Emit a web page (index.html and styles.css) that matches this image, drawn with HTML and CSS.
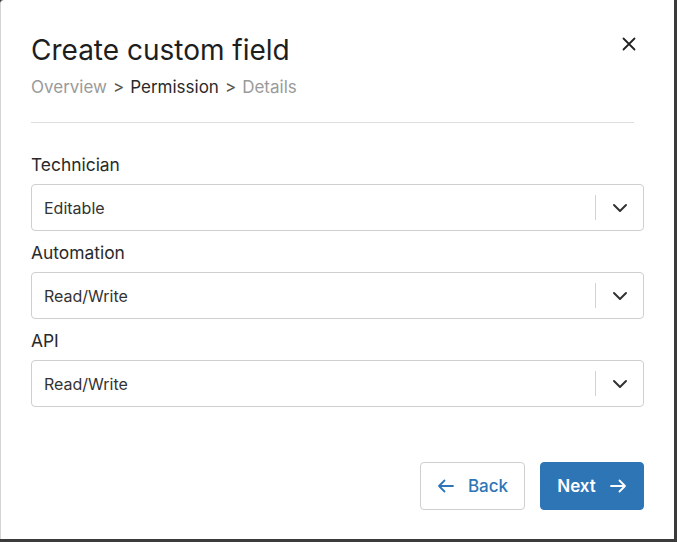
FILE: index.html
```html
<!DOCTYPE html>
<html>
<head>
<meta charset="utf-8">
<link rel="stylesheet" href="styles.css">
</head>
<body>
<div class="dialog">
  <div class="header">
    <div class="header-text">
      <h1 class="title">Create custom field</h1>
      <div class="crumbs">
        <span class="crumb muted">Overview</span>
        <span class="sep">&gt;</span>
        <span class="crumb active">Permission</span>
        <span class="sep">&gt;</span>
        <span class="crumb muted">Details</span>
      </div>
    </div>
    <button class="close" aria-label="Close">
      <svg width="14" height="14" viewBox="0 0 14 14"><path d="M1.5 1.5L12.5 12.5M12.5 1.5L1.5 12.5" stroke="#222" stroke-width="1.8" fill="none" stroke-linecap="round"/></svg>
    </button>
  </div>
  <div class="divider"></div>
  <div class="fields">
    <div class="field">
      <div class="label">Technician</div>
      <div class="select">
        <span class="value">Editable</span>
        <span class="vsep"></span>
        <span class="chev"><svg width="16" height="10" viewBox="0 0 16 10"><path d="M2 2L8 8L14 2" stroke="#333" stroke-width="2" fill="none" stroke-linecap="round" stroke-linejoin="round"/></svg></span>
      </div>
    </div>
    <div class="field">
      <div class="label">Automation</div>
      <div class="select">
        <span class="value">Read/Write</span>
        <span class="vsep"></span>
        <span class="chev"><svg width="16" height="10" viewBox="0 0 16 10"><path d="M2 2L8 8L14 2" stroke="#333" stroke-width="2" fill="none" stroke-linecap="round" stroke-linejoin="round"/></svg></span>
      </div>
    </div>
    <div class="field">
      <div class="label">API</div>
      <div class="select">
        <span class="value">Read/Write</span>
        <span class="vsep"></span>
        <span class="chev"><svg width="16" height="10" viewBox="0 0 16 10"><path d="M2 2L8 8L14 2" stroke="#333" stroke-width="2" fill="none" stroke-linecap="round" stroke-linejoin="round"/></svg></span>
      </div>
    </div>
  </div>
  <div class="footer">
    <button class="btn btn-back">
      <svg width="18" height="14" viewBox="0 0 18 14"><path d="M16 7H2M7.5 1.5L2 7L7.5 12.5" stroke="#2e75b6" stroke-width="1.8" fill="none" stroke-linecap="round" stroke-linejoin="round"/></svg>
      <span>Back</span>
    </button>
    <button class="btn btn-next">
      <span>Next</span>
      <svg width="18" height="14" viewBox="0 0 18 14"><path d="M2 7H16M10.5 1.5L16 7L10.5 12.5" stroke="#fff" stroke-width="1.8" fill="none" stroke-linecap="round" stroke-linejoin="round"/></svg>
    </button>
  </div>
</div>
</body>
</html>
```
FILE: styles.css
```css
* { box-sizing: border-box; }
html, body { margin: 0; padding: 0; }
body {
  background: #3b3b3b;
  width: 677px;
  height: 542px;
  font-family: Inter, "Noto Sans", sans-serif;
  color: #222;
}
.dialog {
  width: 674px;
  height: 539px;
  background: #fff;
  border-left: 1px solid #d4d4d4;
  border-radius: 4px 0 0 0;
  padding: 33px 30px 29px 30px;
  display: flex;
  flex-direction: column;
}
.header {
  display: flex;
  justify-content: space-between;
  align-items: flex-start;
  padding-right: 10px;
}
.title {
  margin: 0;
  font-size: 28px;
  line-height: 34px;
  font-weight: 400;
  color: #1e1e1e;
}
.crumbs {
  margin-top: 8px;
  font-size: 17px;
  line-height: 24px;
  display: flex;
  gap: 6px;
}
.muted { color: #9a9a9a; }
.active { color: #2a2a2a; }
.sep { color: #555; }
.close {
  border: none;
  background: none;
  padding: 0;
  margin-top: 4px;
  margin-right: -2px;
  width: 14px;
  height: 14px;
  display: flex;
}
.divider {
  height: 1px;
  background: #dedede;
  margin: 23px 10px 0 0;
}
.fields {
  margin-top: 30px;
  display: flex;
  flex-direction: column;
  gap: 10px;
}
.field { display: flex; flex-direction: column; }
.label {
  font-size: 17.4px;
  line-height: 24px;
  color: #2a2a2a;
  margin-bottom: 7px;
}
.select {
  height: 47px;
  border: 1px solid #cfcfcf;
  border-radius: 4px;
  display: flex;
  align-items: center;
  padding-left: 12px;
}
.value {
  flex: 1;
  font-size: 16px;
  color: #333;
}
.vsep {
  width: 1px;
  height: 25px;
  background: #d2d2d2;
}
.chev {
  width: 47px;
  display: flex;
  justify-content: center;
  align-items: center;
}
.footer {
  margin-top: auto;
  display: flex;
  justify-content: flex-end;
  gap: 15px;
}
.btn {
  height: 48px;
  border-radius: 4px;
  font-family: Inter, "Noto Sans", sans-serif;
  font-size: 17px;
  display: flex;
  align-items: center;
  justify-content: center;
  gap: 13px;
  padding: 0;
}
.btn-back {
  width: 105px;
  background: #fff;
  border: 1px solid #cfcfcf;
  color: #2e75b6;
  font-weight: 500;
}
.btn-next {
  width: 104px;
  background: #2e75b6;
  border: 1px solid #2e75b6;
  color: #fff;
  font-weight: 600;
}
```
